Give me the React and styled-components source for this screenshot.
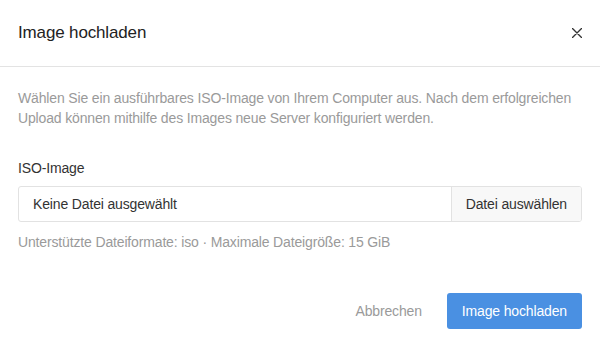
import React from "react";
import styled, { createGlobalStyle } from "styled-components";

const Global = createGlobalStyle`
  html, body { margin: 0; padding: 0; background: #fff; }
  body {
    font-family: "Liberation Sans", Arial, sans-serif;
    letter-spacing: -0.15px;
    -webkit-font-smoothing: antialiased;
  }
  * { box-sizing: border-box; }
`;

const Dialog = styled.div`
  width: 600px;
  height: 348px;
  background: #fff;
  display: flex;
  flex-direction: column;
`;

const Header = styled.div`
  height: 67px;
  padding: 0 18px 1px;
  display: flex;
  align-items: center;
  justify-content: space-between;
  border-bottom: 1px solid #e3e3e3;
`;

const Title = styled.h2`
  margin: 0;
  font-size: 17px;
  font-weight: 400;
  color: #222;
`;

const Close = styled.button`
  border: 0;
  background: none;
  padding: 0;
  width: 10px;
  height: 10px;
  display: flex;
  cursor: pointer;
`;

const Body = styled.div`
  padding: 21px 18px 0;
  display: flex;
  flex-direction: column;
`;

const Description = styled.p`
  margin: 0;
  font-size: 14px;
  line-height: 20px;
  color: #9a9a9a;
`;

const Label = styled.label`
  margin-top: 30px;
  font-size: 14px;
  line-height: 20px;
  color: #333;
`;

const FileField = styled.div`
  margin-top: 8px;
  height: 36px;
  display: flex;
  border: 1px solid #e2e2e2;
  border-radius: 3px;
  overflow: hidden;
`;

const FileName = styled.div`
  flex: 1;
  display: flex;
  align-items: center;
  padding: 0 14px;
  font-size: 14px;
  color: #333;
`;

const PickButton = styled.button`
  border: 0;
  border-left: 1px solid #e2e2e2;
  background: #f8f8f8;
  padding: 0 14px;
  font-family: inherit;
  letter-spacing: inherit;
  font-size: 14px;
  color: #333;
`;

const Hint = styled.div`
  margin-top: 10px;
  font-size: 14px;
  line-height: 20px;
  color: #9a9a9a;
`;

const Footer = styled.div`
  margin-top: 41px;
  padding: 0 18px;
  display: flex;
  justify-content: flex-end;
  align-items: center;
  gap: 9px;
`;

const Button = styled.button`
  height: 36px;
  padding: 0 ${(p) => (p.$primary ? "15px" : "16px")};
  border-radius: 3px;
  border: 0;
  font-family: inherit;
  letter-spacing: inherit;
  font-size: 14px;
  background: ${(p) => (p.$primary ? "#4a90e2" : "transparent")};
  color: ${(p) => (p.$primary ? "#fff" : "#9a9a9a")};
`;

export default function App() {
  return (
    <>
      <Global />
      <Dialog>
        <Header>
          <Title>Image hochladen</Title>
          <Close aria-label="Schließen">
            <svg width="10" height="10" viewBox="0 0 10 10">
              <path d="M0.5 0.5L9.5 9.5M9.5 0.5L0.5 9.5" stroke="#333" strokeWidth="1.4" strokeLinecap="round" />
            </svg>
          </Close>
        </Header>
        <Body>
          <Description>
            Wählen Sie ein ausführbares ISO-Image von Ihrem Computer aus. Nach dem erfolgreichen
            Upload können mithilfe des Images neue Server konfiguriert werden.
          </Description>
          <Label>ISO-Image</Label>
          <FileField>
            <FileName>Keine Datei ausgewählt</FileName>
            <PickButton>Datei auswählen</PickButton>
          </FileField>
          <Hint>Unterstützte Dateiformate: iso · Maximale Dateigröße: 15 GiB</Hint>
        </Body>
        <Footer>
          <Button>Abbrechen</Button>
          <Button $primary>Image hochladen</Button>
        </Footer>
      </Dialog>
    </>
  );
}
